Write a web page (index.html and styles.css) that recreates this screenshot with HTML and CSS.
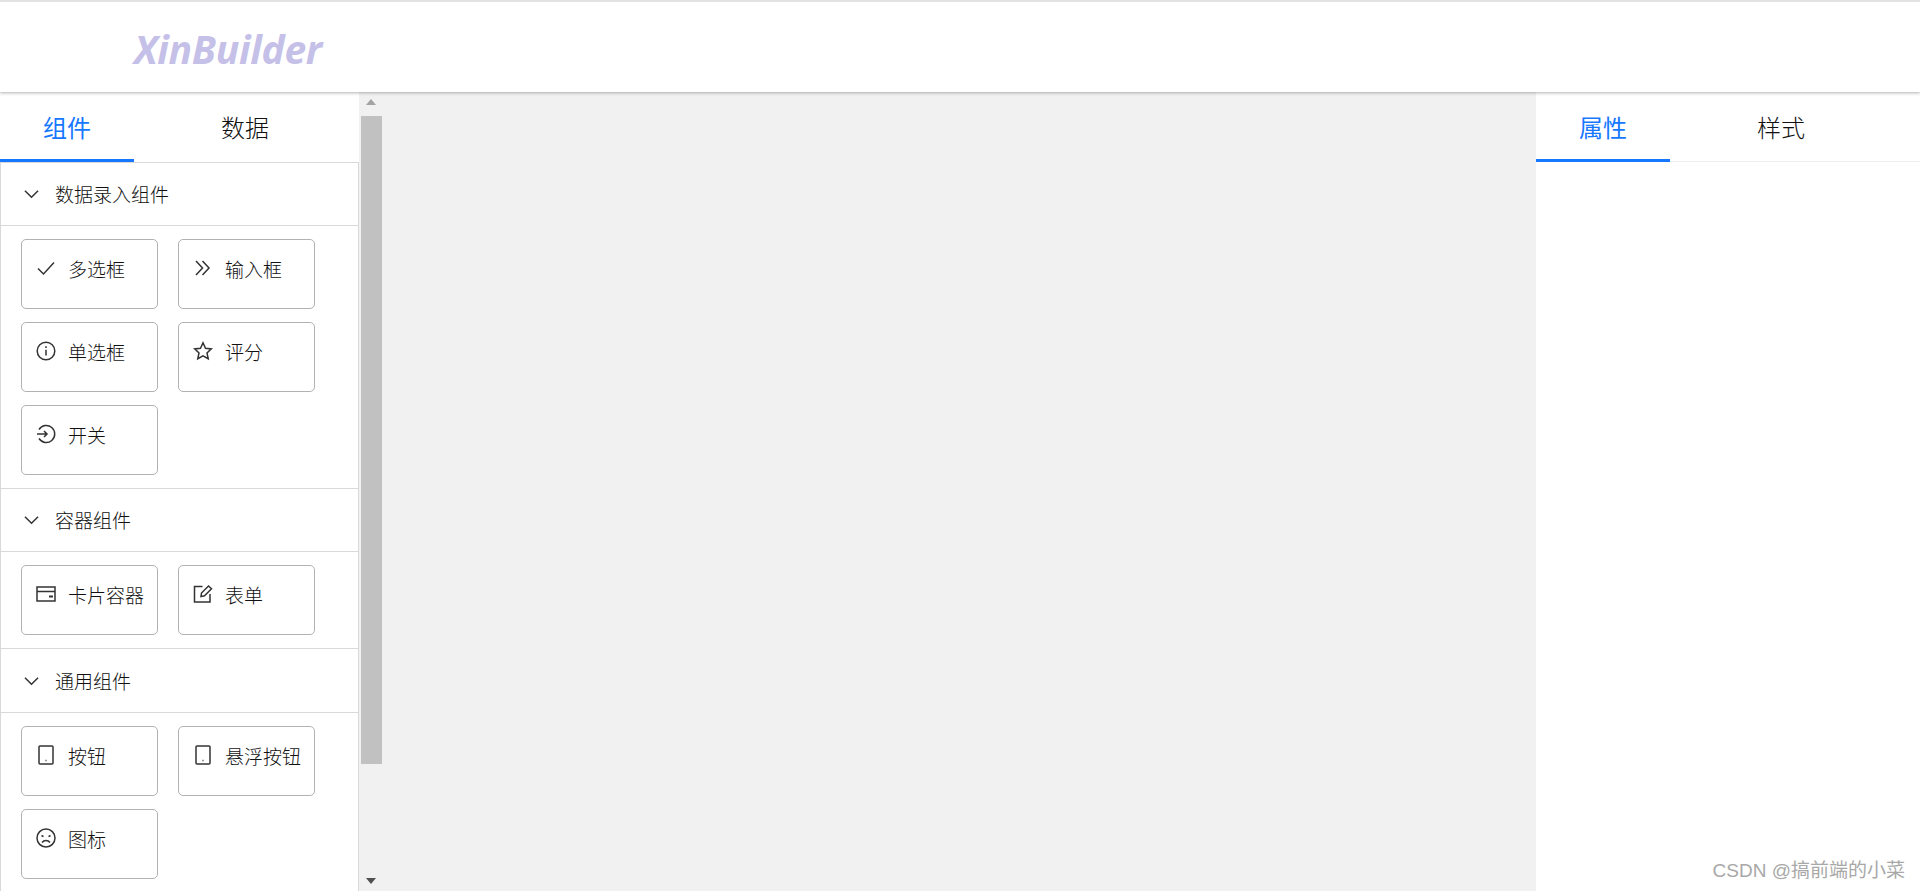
FILE: index.html
```html
<!DOCTYPE html>
<html lang="zh-CN">
  <head>
    <meta charset="UTF-8" />
    <meta name="viewport" content="width=device-width, initial-scale=1.0" />
    <title>XinBuilder</title>
    <link rel="stylesheet" href="styles.css">
  </head>

  <body>
    <header class="top-bar">
      <div class="logo">XinBuilder</div>
    </header>

    <div class="workspace">
      <aside class="left-panel">
        <div class="tabs">
          <div class="tab active">组件</div>
          <div class="tab">数据</div>
        </div>

        <div class="collapse">
          <div class="group-title">
            <svg class="arrow" viewBox="0 0 16 10"><path d="M1 1.500 8 8.500l7-7" /></svg>
            <span>数据录入组件</span>
          </div>
          <div class="group-body">
            <div class="item">
              <svg class="icon" viewBox="0 0 20 20"><path d="M2 10.500 7.500 16 18 4.500" /></svg>
              <span>多选框</span>
            </div>
            <div class="item">
              <svg class="icon" viewBox="0 0 20 20"><path d="M3 3l6.500 7L3 17M9.500 3l6.500 7-6.500 7" /></svg>
              <span>输入框</span>
            </div>
            <div class="item">
              <svg class="icon" viewBox="0 0 20 20"><circle cx="10" cy="10" r="8.800" /><path d="M10 8.800v5.700M10 5.200v1.800" /></svg>
              <span>单选框</span>
            </div>
            <div class="item">
              <svg class="icon" viewBox="0 0 20 20"><path d="M10 1.800l2.500 5.400 5.800.7-4.300 4 1.200 5.800-5.200-2.900-5.200 2.900 1.200-5.800-4.300-4 5.800-.7z" /></svg>
              <span>评分</span>
            </div>
            <div class="item">
              <svg class="icon" viewBox="0 0 20 20"><path d="M3 5.500A8.500 8.500 0 1 1 3 14.500M1 10h10M8 7l3 3-3 3" /></svg>
              <span>开关</span>
            </div>
          </div>

          <div class="group-title">
            <svg class="arrow" viewBox="0 0 16 10"><path d="M1 1.500 8 8.500l7-7" /></svg>
            <span>容器组件</span>
          </div>
          <div class="group-body">
            <div class="item">
              <svg class="icon" viewBox="0 0 20 20"><path d="M1 3h18v14H1zM1 7.500h18" /><path class="solid" d="M13 12.500h4" /></svg>
              <span>卡片容器</span>
            </div>
            <div class="item">
              <svg class="icon" viewBox="0 0 20 20"><path d="M9.500 2.500H1.500v15.500h15.500v-8" /><path d="M8 12.500l.5-3.500L15.500 2l3 2.800-7 7z" /></svg>
              <span>表单</span>
            </div>
          </div>

          <div class="group-title tall">
            <svg class="arrow" viewBox="0 0 16 10"><path d="M1 1.500 8 8.500l7-7" /></svg>
            <span>通用组件</span>
          </div>
          <div class="group-body last">
            <div class="item">
              <svg class="icon" viewBox="0 0 20 20"><rect x="3" y="1" width="14" height="18" rx="1" /><path d="M9.500 15.500h1" /></svg>
              <span>按钮</span>
            </div>
            <div class="item">
              <svg class="icon" viewBox="0 0 20 20"><rect x="3" y="1" width="14" height="18" rx="1" /><path d="M9.500 15.500h1" /></svg>
              <span>悬浮按钮</span>
            </div>
            <div class="item">
              <svg class="icon" viewBox="0 0 20 20"><circle cx="10" cy="10" r="9" /><path d="M6 14.500c2-2.600 6-2.600 8 0M5.500 7.500l2 1.200M14.500 7.500l-2 1.200" /></svg>
              <span>图标</span>
            </div>
          </div>
        </div>
      </aside>

      <div class="scrollbar">
        <div class="scroll-up"></div>
        <div class="scroll-thumb"></div>
        <div class="scroll-down"></div>
      </div>

      <main class="canvas"></main>

      <aside class="right-panel">
        <div class="tabs light">
          <div class="tab active">属性</div>
          <div class="tab">样式</div>
        </div>
      </aside>
    </div>

    <div class="watermark">CSDN @搞前端的小菜</div>
  </body>
</html>
```

FILE: styles.css
```css
html,
body {
  height: 100%;
}

body {
  display: flex;
  flex-direction: column;
  margin: 0;
  overflow: hidden;
  background: #fff;
  color: #111;
  font-family: "Noto Sans CJK SC", "Liberation Sans", sans-serif;
  font-weight: 300;
}

.top-bar {
  position: relative;
  z-index: 2;
  flex: none;
  display: flex;
  align-items: center;
  box-sizing: border-box;
  height: 92px;
  padding-left: 134px;
  border-top: 2px solid #e2e2e2;
  background: #fff;
  box-shadow: 0 1px 3px rgba(90, 80, 80, 0.45);
}

.logo {
  color: #c5c0e8;
  font-family: "Open Sans", sans-serif;
  font-size: 39px;
  font-style: italic;
  font-weight: 700;
  letter-spacing: -0.3px;
  line-height: 1;
  margin-top: 2px;
}

.workspace {
  flex: 1;
  display: flex;
  min-height: 0;
}

.left-panel {
  flex: none;
  width: 359px;
  background: #fff;
}

.tabs {
  display: flex;
  gap: 44px;
  height: 70px;
  box-sizing: border-box;
}

.tab {
  box-sizing: border-box;
  width: 134px;
  height: 70px;
  padding-top: 18px;
  font-size: 24px;
  line-height: 34px;
  text-align: center;
}

.tab.active {
  border-bottom: 3px solid #1677ff;
  color: #1677ff;
  font-weight: 400;
}

.tabs.light {
  border-bottom: 1px solid #eee;
}

.collapse {
  border: 1px solid #d9d9d9;
  height: 760px;
  box-sizing: border-box;
}

.group-title {
  display: flex;
  align-items: center;
  gap: 16px;
  box-sizing: border-box;
  height: 63px;
  padding-left: 23px;
  border-bottom: 1px solid #d9d9d9;
  font-size: 19px;
  line-height: 24px;
}

.group-title.tall {
  height: 64px;
}

.arrow {
  width: 15px;
  height: 10px;
  fill: none;
  stroke: #333;
  stroke-width: 1.6;
}

.group-body {
  display: grid;
  grid-template-columns: 137px 137px;
  grid-auto-rows: 70px;
  gap: 13px 20px;
  padding: 13px 0 13px 20px;
  border-bottom: 1px solid #d9d9d9;
}

.group-body.last {
  border-bottom: 0;
}

.item {
  display: flex;
  align-items: flex-start;
  gap: 12px;
  box-sizing: border-box;
  padding: 16px 0 0 13px;
  border: 1px solid #b5b1b1;
  border-radius: 5px;
  font-size: 19px;
  line-height: 26px;
}

.icon {
  flex: none;
  width: 20px;
  height: 20px;
  margin: 2px 0 0 1px;
  fill: none;
  stroke: #333;
  stroke-width: 1.5;
}

.icon .solid {
  stroke-width: 2;
}

.scrollbar {
  flex: none;
  position: relative;
  width: 23px;
  padding-left: 2px;
  box-sizing: border-box;
  background: #f1f1f1;
}

.scroll-thumb {
  width: 21px;
  height: 648px;
  background: #c1c1c1;
}

.scroll-up {
  height: 24px;
  position: relative;
}

.scroll-up::after {
  content: "";
  position: absolute;
  left: 5px;
  top: 7px;
  border: 5.5px solid transparent;
  border-top: 0;
  border-bottom: 6px solid #a3a3a3;
}

.scroll-down {
  position: absolute;
  left: 7px;
  bottom: 7px;
  border: 5.5px solid transparent;
  border-bottom: 0;
  border-top: 6px solid #505050;
}

.canvas {
  flex: 1;
  background: #f1f1f1;
}

.right-panel {
  flex: none;
  width: 384px;
  background: #fff;
}

.watermark {
  position: absolute;
  right: 15px;
  bottom: 8px;
  color: #a8a8a8;
  font-family: "Liberation Sans", "Noto Sans CJK SC", sans-serif;
  font-size: 19px;
  font-weight: 400;
  line-height: 24px;
}
```
